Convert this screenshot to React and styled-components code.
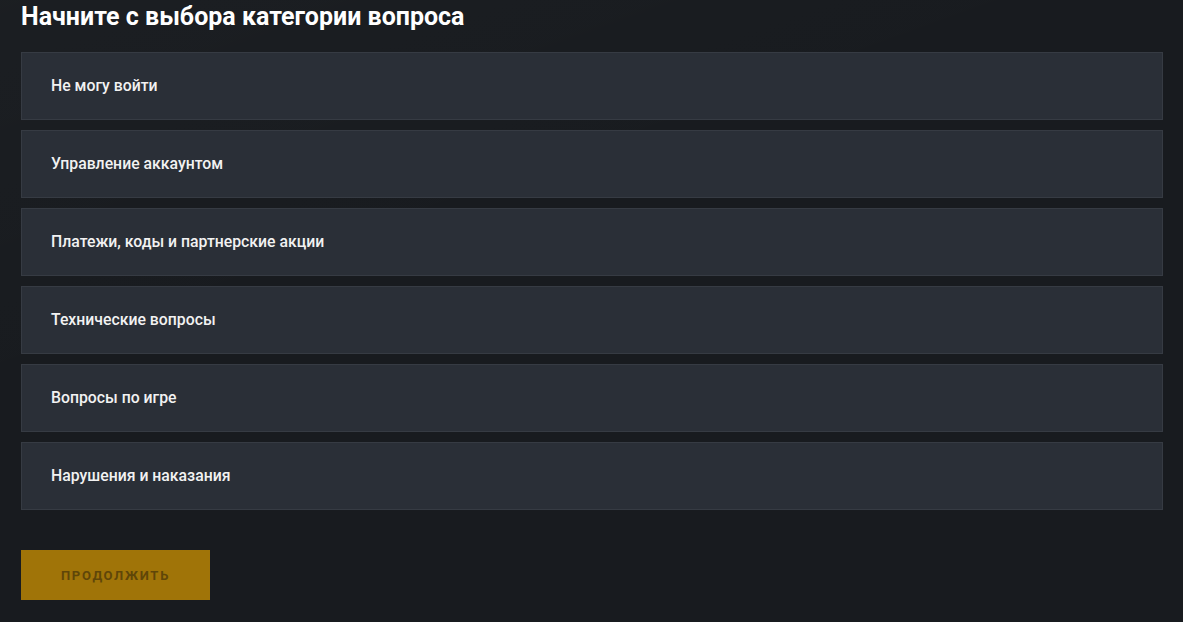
import React, { useState } from 'react';
import styled, { createGlobalStyle } from 'styled-components';

const GlobalStyle = createGlobalStyle`
  html, body {
    margin: 0;
    padding: 0;
    background: #181b1f;
  }
  body {
    font-family: Roboto, "Liberation Sans", Arial, sans-serif;
    color: #ffffff;
  }
`;

const categories = [
  'Не могу войти',
  'Управление аккаунтом',
  'Платежи, коды и партнерские акции',
  'Технические вопросы',
  'Вопросы по игре',
  'Нарушения и наказания',
];

const App = () => {
  const [selected, setSelected] = useState(null);

  return (
    <>
      <GlobalStyle />
      <Page>
        <Title>Начните с выбора категории вопроса</Title>
        <CategoryList>
          {categories.map((name, i) => (
            <CategoryItem
              key={name}
              $active={selected === i}
              onClick={() => setSelected(i)}
            >
              {name}
            </CategoryItem>
          ))}
        </CategoryList>
        <ContinueButton disabled={selected === null}>Продолжить</ContinueButton>
      </Page>
    </>
  );
};

const Page = styled.div`
  min-height: 622px;
  box-sizing: border-box;
  padding: 2px 20px 22px 21px;
  background:
    linear-gradient(160deg, rgba(255,255,255,0.015) 0%, rgba(255,255,255,0) 40%),
    #181b1f;
`;

const Title = styled.h1`
  margin: 0 0 20px;
  font-size: 25px;
  line-height: 30px;
  font-weight: 700;
  color: #ffffff;
`;

const CategoryList = styled.div`
  display: flex;
  flex-direction: column;
  gap: 10px;
`;

const CategoryItem = styled.div`
  box-sizing: border-box;
  height: 68px;
  display: flex;
  align-items: center;
  padding: 0 29px 2px;
  background: ${p => (p.$active ? '#333943' : '#2a2f37')};
  border: 1px solid #363b43;
  font-size: 15.8px;
  font-weight: 500;
  color: #f2f2f2;
  cursor: pointer;
`;

const ContinueButton = styled.button`
  margin-top: 40px;
  width: 189px;
  height: 50px;
  border: none;
  background: #a07408;
  color: #5f4608;
  font-family: Roboto, "Liberation Sans", Arial, sans-serif;
  font-size: 13px;
  font-weight: 700;
  letter-spacing: 1.7px;
  text-transform: uppercase;
  cursor: ${p => (p.disabled ? 'default' : 'pointer')};
`;

export default App;
